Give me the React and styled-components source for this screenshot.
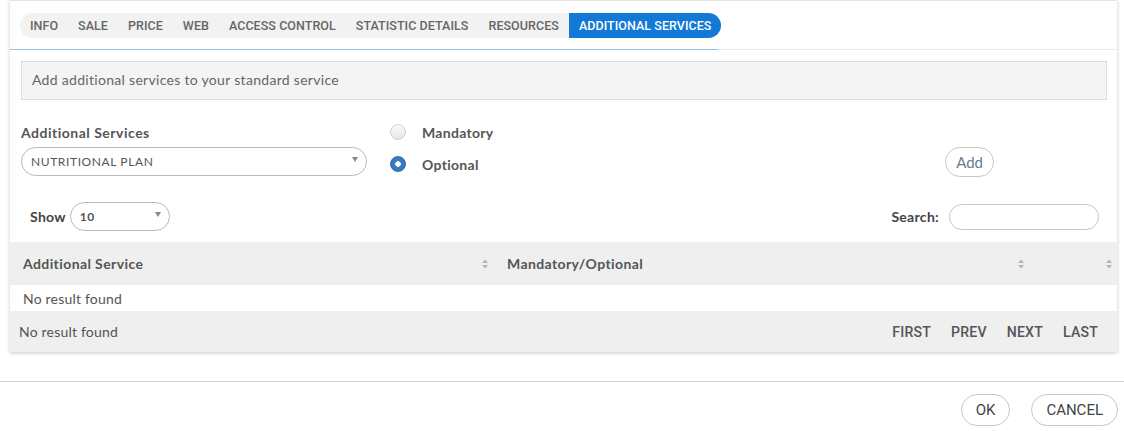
import React from 'react'
import styled, { createGlobalStyle } from 'styled-components'

const GlobalStyle = createGlobalStyle`
  html, body {
    margin: 0;
    padding: 0;
    background: #fff;
    font-family: Lato, "Open Sans", sans-serif;
    color: #555;
  }
`

const Page = styled.div`
  width: 1124px;
  height: 431px;
  overflow: hidden;
`

const Panel = styled.div`
  margin: 0 7px 0 10px;
  height: 352px;
  background: #fff;
  border-top: 1px solid #e4e4e4;
  box-shadow: 0 1px 4px rgba(0, 0, 0, 0.22);
  box-sizing: border-box;
`

const TabBar = styled.div`
  display: flex;
  height: 49px;
  border-bottom: 1px solid #e9e9e9;
  box-sizing: border-box;
  padding: 12px 0 0 10px;
  position: relative;
`

const TabStrip = styled.div`
  display: flex;
  background: #f2f2f2;
  border-radius: 13px;
  height: 25px;
  &::after {
    content: '';
    position: absolute;
    left: 0;
    width: 708px;
    top: 48px;
    height: 1px;
    background: #8cc4ef;
  }
`

const Tab = styled.div`
  display: flex;
  align-items: center;
  padding: 0 10px;
  font-family: Roboto, sans-serif;
  font-size: 12.5px;
  font-weight: 500;
  color: ${p => (p.$active ? '#fff' : '#666')};
  background: ${p => (p.$active ? '#1379d6' : 'transparent')};
  border-radius: ${p => (p.$active ? '0 13px 13px 0' : '0')};
  letter-spacing: 0.05px;
`

const Body = styled.div`
  padding: 11px 10px 0 11px;
`

const Note = styled.div`
  height: 39px;
  background: #f4f4f4;
  border: 1px solid #dddddd;
  box-sizing: border-box;
  display: flex;
  align-items: center;
  padding: 0 0 2px 10px;
  font-size: 14px;
  letter-spacing: 0.3px;
  color: #666;
`

const FormRow = styled.div`
  display: flex;
  margin-top: 23px;
  height: 58px;
`

const Field = styled.div`
  width: 346px;
  display: flex;
  flex-direction: column;
`

const Label = styled.div`
  font-weight: 700;
  font-size: 14px;
  letter-spacing: 0.5px;
  color: #555;
  height: 24px;
  line-height: 20px;
`

const Select = styled.div`
  height: 29px;
  width: ${p => p.$w};
  border: 1px solid #b9b9b9;
  border-radius: 15px;
  box-sizing: border-box;
  display: flex;
  align-items: center;
  justify-content: space-between;
  padding: 0 8px 0 ${p => p.$pl || '9px'};
  font-size: ${p => p.$fs || '12px'};
  font-weight: ${p => p.$fw || 400};
  color: #555;
  letter-spacing: ${p => p.$ls || '0.6px'};
`

const Caret = styled.span`
  width: 0;
  height: 0;
  border-left: 3px solid transparent;
  border-right: 3px solid transparent;
  border-top: 5px solid #888;
  margin-top: -4px;
`

const Radios = styled.div`
  margin-left: 23px;
  display: flex;
  flex-direction: column;
  gap: 14px;
`

const RadioRow = styled.div`
  display: flex;
  align-items: center;
  gap: 16px;
  font-weight: 700;
  font-size: 14px;
  letter-spacing: 0.3px;
  color: #555;
  height: 18px;
`

const RadioDot = styled.span`
  width: 16px;
  height: 16px;
  border-radius: 50%;
  box-sizing: border-box;
  background: ${p => (p.$on ? 'radial-gradient(circle, #fff 0 2.5px, #3f80c4 3px, #2c6db5 100%)' : 'linear-gradient(#fafafa, #e6e6e6)')};
  border: 1px solid ${p => (p.$on ? '#2c6cb2' : '#d2d2d2')};
`

const Spacer = styled.div`
  flex: 1;
`

const PillButton = styled.div`
  height: ${p => p.$h || '30px'};
  padding: 0 ${p => p.$px || '11px'};
  border: 1px solid #c8c8c8;
  border-radius: 16px;
  box-sizing: border-box;
  display: flex;
  align-items: center;
  font-family: ${p => p.$font || 'Lato, sans-serif'};
  font-size: ${p => p.$fs || '14px'};
  color: ${p => p.$color || '#555'};
  background: #fff;
`

const AddWrap = styled.div`
  padding-top: 24px;
  margin-right: 113px;
`

const ControlsRow = styled.div`
  display: flex;
  align-items: center;
  margin-top: 21px;
  padding-left: 20px;
  padding-right: 9px;
  height: 29px;
`

const Inline = styled.div`
  display: flex;
  align-items: center;
  gap: ${p => p.$gap || '4px'};
  margin-right: ${p => p.$mr || '0'};
  font-weight: 700;
  font-size: 14px;
  letter-spacing: 0.3px;
  color: #444;
`

const SearchInput = styled.div`
  width: 150px;
  height: 26px;
  border: 1px solid #c8c8c8;
  border-radius: 13px;
  box-sizing: border-box;
`

const Table = styled.div`
  margin-top: 11px;
`

const HeadRow = styled.div`
  display: grid;
  grid-template-columns: 484px 536px 1fr;
  height: 43px;
  background: #efefef;
  align-items: center;
  font-weight: 700;
  font-size: 14px;
  letter-spacing: 0.4px;
  color: #555;
`

const HeadCell = styled.div`
  display: flex;
  align-items: center;
  justify-content: ${p => p.$end ? 'flex-end' : 'space-between'};
  padding-left: ${p => p.$pl || '13px'};
  padding-right: ${p => p.$pr || '5px'};
`

const Sort = styled.svg`
  width: 8px;
  height: 10px;
`

const DataRow = styled.div`
  height: 26px;
  display: flex;
  align-items: center;
  padding-left: 13px;
  font-size: 14px;
  letter-spacing: 0.2px;
  color: #555;
  background: #fff;
`

const FootRow = styled.div`
  height: 41px;
  background: #efefef;
  display: flex;
  align-items: center;
  justify-content: space-between;
  padding: 0 19px 0 9px;
  font-size: 14px;
  letter-spacing: 0.2px;
  color: #555;
`

const Pager = styled.div`
  display: flex;
  gap: 20px;
  font-family: Roboto, sans-serif;
  font-weight: 500;
  font-size: 14.1px;
  color: #555;
`

const Divider = styled.div`
  margin-top: 29px;
  height: 1px;
  background: #cfcfcf;
`

const Actions = styled.div`
  display: flex;
  justify-content: flex-end;
  gap: 21px;
  padding: 12px 6px 0 0;
`

function SortIcon() {
  return (
    <Sort viewBox="0 0 8 10">
      <path d="M4 0.5 L7.2 4 H0.8 Z" fill="#b9b9b9" />
      <path d="M4 9.5 L7.2 6 H0.8 Z" fill="#b9b9b9" />
    </Sort>
  )
}

const tabs = ['INFO', 'SALE', 'PRICE', 'WEB', 'ACCESS CONTROL', 'STATISTIC DETAILS', 'RESOURCES', 'ADDITIONAL SERVICES']

export default function App() {
  return (
    <Page>
      <GlobalStyle />
      <Panel>
        <TabBar>
          <TabStrip>
            {tabs.map(t => (
              <Tab key={t} $active={t === 'ADDITIONAL SERVICES'}>{t}</Tab>
            ))}
          </TabStrip>
        </TabBar>
        <Body>
          <Note>Add additional services to your standard service</Note>
          <FormRow>
            <Field>
              <Label>Additional Services</Label>
              <Select $w="346px">
                NUTRITIONAL PLAN
                <Caret />
              </Select>
            </Field>
            <Radios>
              <RadioRow><RadioDot />Mandatory</RadioRow>
              <RadioRow><RadioDot $on />Optional</RadioRow>
            </Radios>
            <Spacer />
            <AddWrap>
              <PillButton $color="#6a7a90" $px="10px" $fs="15px">Add</PillButton>
            </AddWrap>
          </FormRow>
        </Body>
        <ControlsRow>
          <Inline $gap="4px">
            Show
            <Select $w="100px" $fs="12px" $fw={700} $pl="9px" $ls="0.4px">
              <span>10</span>
              <Caret />
            </Select>
          </Inline>
          <Spacer />
          <Inline $gap="10px" $mr="9px">
            Search:
            <SearchInput />
          </Inline>
        </ControlsRow>
        <Table>
          <HeadRow>
            <HeadCell>
              Additional Service
              <SortIcon />
            </HeadCell>
            <HeadCell>
              Mandatory/Optional
              <SortIcon />
            </HeadCell>
            <HeadCell $pl="0" $pr="4px" $end>
              <SortIcon />
            </HeadCell>
          </HeadRow>
          <DataRow>No result found</DataRow>
          <FootRow>
            <span>No result found</span>
            <Pager>
              <span>FIRST</span>
              <span>PREV</span>
              <span>NEXT</span>
              <span>LAST</span>
            </Pager>
          </FootRow>
        </Table>
      </Panel>
      <Divider />
      <Actions>
        <PillButton $h="32px" $px="14px" $fs="15px" $font="Roboto, sans-serif" $color="#444">OK</PillButton>
        <PillButton $h="32px" $px="14px" $fs="15px" $font="Roboto, sans-serif" $color="#444">CANCEL</PillButton>
      </Actions>
    </Page>
  )
}
